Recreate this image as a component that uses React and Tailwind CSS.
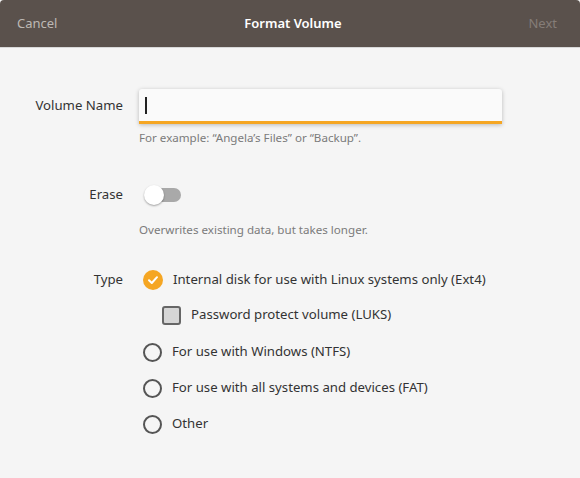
import React from 'react'

// Format Volume dialog
const font = { fontFamily: '"Noto Sans", "Open Sans", sans-serif' }

function Radio({ checked }) {
  if (checked) {
    return (
      <span className="w-[20px] h-[20px] rounded-full bg-[#f5a623] flex items-center justify-center shrink-0">
        <svg width="12" height="12" viewBox="0 0 12 12" fill="none">
          <path d="M2 6.2 L4.8 9 L10 3.2" stroke="white" strokeWidth="2" strokeLinecap="round" strokeLinejoin="round" />
        </svg>
      </span>
    )
  }
  return <span className="w-[19px] h-[19px] rounded-full border-2 border-[#555] shrink-0" />
}

export default function App() {
  return (
    <div className="w-[580px] h-[478px] bg-[#f5f5f5] overflow-hidden" style={font}>
      {/* header bar */}
      <div className="h-[48px] bg-[#5a514c] border-b border-[#d8d8d8] flex items-center justify-between pl-[17px] pr-[23px] text-[13px] rounded-t-[4px]">
        <span className="text-[#bdb8b4]">Cancel</span>
        <span className="text-white font-semibold">Format Volume</span>
        <span className="text-[#857d78]">Next</span>
      </div>

      <div className="pt-[41px] text-[13.2px] leading-[20px] text-[#333]">
        {/* volume name */}
        <div className="flex items-center">
          <div className="w-[123px] text-right pb-[3px]">Volume Name</div>
          <div className="ml-[16px] w-[363px] h-[35px] bg-[#fafafa] rounded-t-[3px] border-b-[3px] border-[#f5a623] shadow-[0_1px_4px_rgba(0,0,0,0.25)] flex items-center px-[6px]">
            <span className="w-[1.5px] h-[17px] bg-[#222]" />
          </div>
        </div>
        <div className="ml-[139px] mt-[6px] text-[11.6px] leading-[16px] text-[#7b7b7b]">
          For example: “Angela’s Files” or “Backup”.
        </div>

        {/* erase */}
        <div className="flex items-center mt-[38px]">
          <div className="w-[123px] text-right pb-[2px]">Erase</div>
          <div className="ml-[21px] relative w-[37px] h-[20px] flex items-center">
            <span className="ml-[6px] w-[31px] h-[14px] rounded-full bg-[#a9a9a9]" />
            <span className="absolute left-0 top-0 w-[20px] h-[20px] rounded-full bg-white shadow-[0_1px_2px_rgba(0,0,0,0.35)]" />
          </div>
        </div>
        <div className="ml-[139px] mt-[16px] text-[11.6px] leading-[16px] text-[#7b7b7b]">
          Overwrites existing data, but takes longer.
        </div>

        {/* type */}
        <div className="flex items-center mt-[32px] h-[20px]">
          <div className="w-[123px] text-right pb-[3px]">Type</div>
          <div className="ml-[20px] flex items-center gap-[10px]">
            <Radio checked />
            <span className="pb-[3px]">Internal disk for use with Linux systems only (Ext4)</span>
          </div>
        </div>
        <div className="flex items-center mt-[15px] h-[20px] ml-[162px] gap-[10px]">
          <span className="w-[19px] h-[19px] rounded-[3px] border-2 border-[#666] bg-[#d6d6d6]" />
          <span className="pb-[3px]">Password protect volume (LUKS)</span>
        </div>
        <div className="flex items-center mt-[17px] h-[20px] ml-[143px] gap-[10px]">
          <Radio />
          <span className="pb-[3px]">For use with Windows (NTFS)</span>
        </div>
        <div className="flex items-center mt-[16px] h-[20px] ml-[143px] gap-[10px]">
          <Radio />
          <span className="pb-[3px]">For use with all systems and devices (FAT)</span>
        </div>
        <div className="flex items-center mt-[16px] h-[20px] ml-[143px] gap-[10px]">
          <Radio />
          <span className="pb-[3px]">Other</span>
        </div>
      </div>
    </div>
  )
}
